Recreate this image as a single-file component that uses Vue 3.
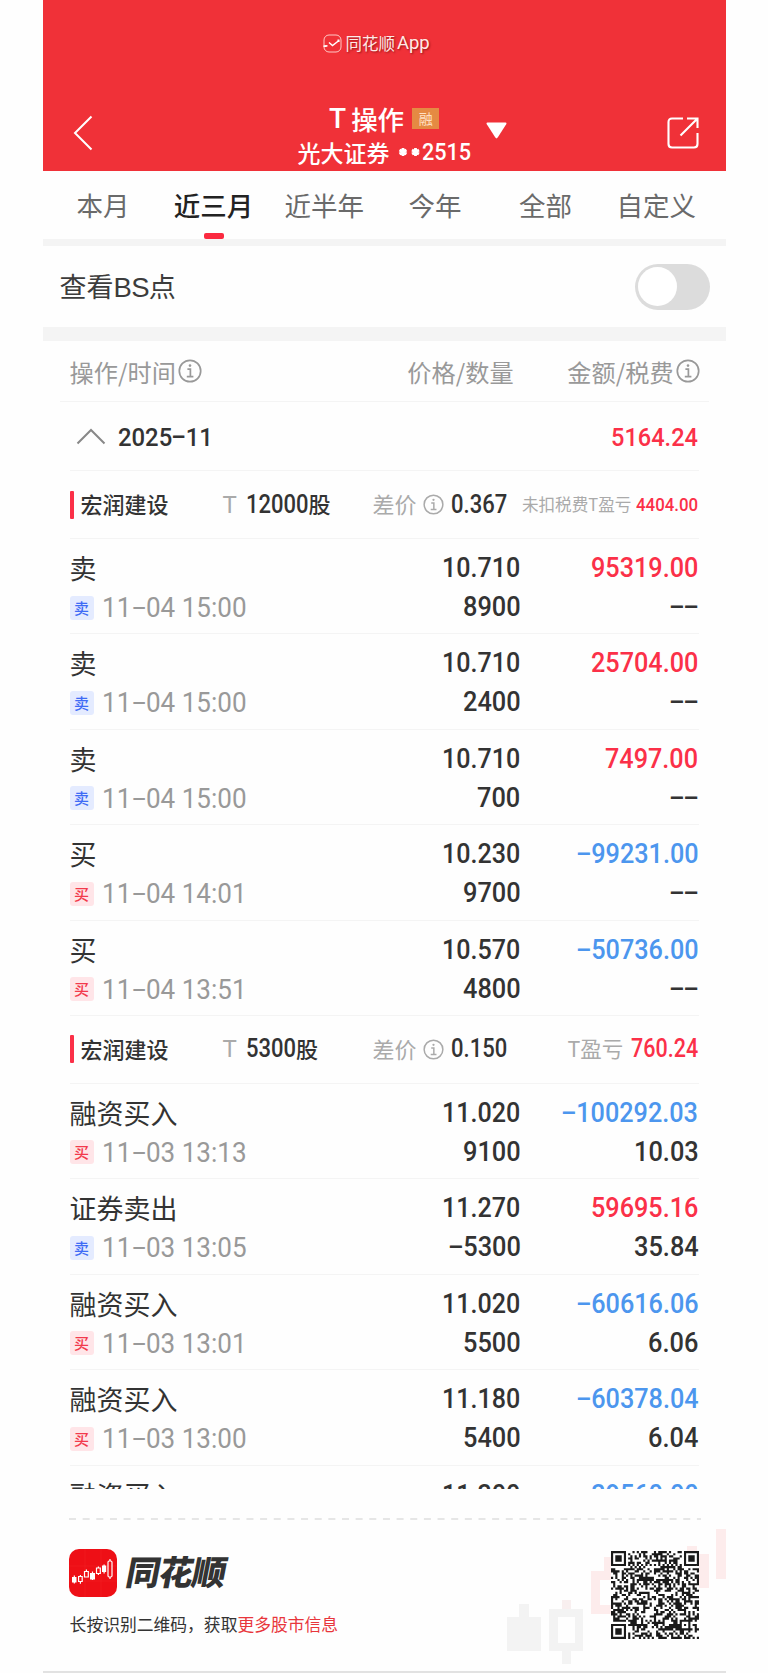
<script setup>
import { h } from 'vue'

const ADVANCE = { '.': 0.27, ':': 0.25, ' ': 0.247 }

// Figures set in a condensed face; the margin gives back the width freed by the scaling.
const Num = (props) => {
  const chars = String(props.t).split('')
  const em = chars.reduce((sum, c) => sum + (ADVANCE[c] ?? 0.5635), 0)
  return h(
    'span',
    {
      class: 'num',
      style: { transform: `scaleX(${props.s})`, marginRight: `${(-(1 - props.s) * em).toFixed(3)}em` }
    },
    chars.map((c) => (c === '-' ? h('span', { class: 'dash' }, [h('span', { class: 'dash-in' }, '-')]) : c))
  )
}
Num.props = ['t', 's']

const Info = () =>
  h('svg', { viewBox: '0 0 24 24', class: 'info', fill: 'none', stroke: 'currentColor', 'stroke-width': 1.7 }, [
    h('circle', { cx: 12, cy: 12, r: 10.7 }),
    h('path', { d: 'M9.4 10.2H12.4V17.6M8.8 17.6H15.4' }),
    h('circle', { cx: 12, cy: 6.6, r: 1.3, fill: 'currentColor', stroke: 'none' })
  ])

const tabs = ['本月', '近三月', '近半年', '今年', '全部', '自定义']

const groups = [
  {
    shares: '12000', diff: '0.367', label: '未扣税费T盈亏', profit: '4404.00', small: true,
    rows: [
      ['卖', '卖', '11-04 15:00', '10.710', '8900', '95319.00', '--'],
      ['卖', '卖', '11-04 15:00', '10.710', '2400', '25704.00', '--'],
      ['卖', '卖', '11-04 15:00', '10.710', '700', '7497.00', '--'],
      ['买', '买', '11-04 14:01', '10.230', '9700', '-99231.00', '--'],
      ['买', '买', '11-04 13:51', '10.570', '4800', '-50736.00', '--']
    ]
  },
  {
    shares: '5300', diff: '0.150', label: 'T盈亏', profit: '760.24', small: false,
    rows: [
      ['融资买入', '买', '11-03 13:13', '11.020', '9100', '-100292.03', '10.03'],
      ['证券卖出', '卖', '11-03 13:05', '11.270', '-5300', '59695.16', '35.84'],
      ['融资买入', '买', '11-03 13:01', '11.020', '5500', '-60616.06', '6.06'],
      ['融资买入', '买', '11-03 13:00', '11.180', '5400', '-60378.04', '6.04'],
      ['融资买入', '', '', '11.300', '', '-39560.00', '']
    ]
  }
]

const N = 41
const finder = (x, y) => {
  const r = Math.max(Math.abs(x - 3), Math.abs(y - 3))
  return r === 3 || r <= 1
}
let seed = 20251
const rand = () => ((seed = (seed * 1103515245 + 12345) % 2147483648) / 2147483648)
let qr = ''
for (let y = 0; y < N; y++) {
  for (let x = 0; x < N; x++) {
    let on = rand() < 0.53
    if (x < 8 && y < 8) on = x < 7 && y < 7 && finder(x, y)
    else if (x > N - 9 && y < 8) on = x > N - 8 && y < 7 && finder(x - N + 7, y)
    else if (x < 8 && y > N - 9) on = x < 7 && y > N - 8 && finder(x, y - N + 7)
    else if (Math.abs(x - 34) < 3 && Math.abs(y - 34) < 3) on = Math.max(Math.abs(x - 34), Math.abs(y - 34)) !== 1
    else if (x === 6 || y === 6) on = (x + y) % 2 === 0
    if (on) qr += `M${x} ${y}h1v1h-1z`
  }
}
</script>

<template>
  <main class="card">
    <header class="top">
      <div class="brand">
        <svg class="brand-icon" viewBox="0 0 19 19" fill="none" stroke="#ffc9c6">
          <rect x="1" y="1" width="17" height="17" rx="5" stroke-width="1" />
          <path d="M0.5 12.3L4.5 11.8M6 8.500L9.500 11.500L16 6.500" stroke="#fff" stroke-width="1.5" />
          <path d="M2.500 11.500V13M15.500 5.500V8" stroke="#fff" stroke-width="2" />
        </svg>
        <span>同花顺</span><span class="latin">App</span>
      </div>
      <div class="bar">
        <svg class="back" viewBox="0 0 20 36" fill="none" stroke="#fff" stroke-width="2"><path d="M18.5 1.5L2 18L18.5 34.5" /></svg>
        <div class="title">
          <div class="line1"><span class="latin t">T</span><span>操作</span><span class="rong">融</span></div>
          <div class="line2"><span>光大证券</span><svg class="stars" viewBox="0 0 24 10" stroke="#fff" stroke-width="2.8"><path d="M5 1V9M1.5 3L8.5 7M1.5 7L8.5 3M17.5 1V9M14 3L21 7M14 7L21 3" /></svg><Num t="2515" :s="0.9" class="acct" /></div>
        </div>
        <div class="right">
          <svg class="caret" viewBox="0 0 21 17"><path d="M1.5 0.5H19.5Q21 0.7 20.2 2.2L11.7 15.6Q10.5 17.2 9.3 15.6L0.8 2.2Q0 0.7 1.5 .5Z" fill="#fff" /></svg>
          <svg class="share" viewBox="0 0 32 32" fill="none" stroke="#fff" stroke-width="2.1"><path d="M16 1.5H5Q1.5 1.5 1.5 5V27Q1.5 30.500 5 30.500H27Q30.500 30.500 30.500 27V16M20 1.500H30.500V11M30 2L13.500 18.500" /></svg>
        </div>
      </div>
    </header>

    <nav class="tabs">
      <div v-for="(t, i) in tabs" :key="t" class="tab" :class="{ on: i === 1 }">{{ t }}</div>
    </nav>

    <section class="switch-row">
      <div class="switch-label">查看<span class="bs">BS</span>点</div>
      <div class="toggle"><i></i></div>
    </section>

    <section class="list">
      <div class="cols">
        <div class="c1">操作/时间<Info /></div>
        <div class="c2">价格/数量</div>
        <div class="c3">金额/税费<Info /></div>
      </div>
      <div class="month">
        <svg class="up" viewBox="0 0 30 17" fill="none" stroke="#888" stroke-width="2"><path d="M1.500 15.500L15 2L28.500 15.500" /></svg>
        <Num t="2025-11" :s="0.9" class="mlabel" />
        <Num t="5164.24" :s="0.89" class="red msum" />
      </div>
      <template v-for="g in groups" :key="g.shares">
        <div class="stock">
          <div class="sname"><span>宏润建设</span></div>
          <div class="shares"><span class="latin tee">T</span><Num :t="g.shares" :s="0.88" class="sn" /><b>股</b></div>
          <div class="diff"><span>差价</span><Info /><Num :t="g.diff" :s="0.88" class="sn" /></div>
          <div class="profit" :class="{ small: g.small }"><span>{{ g.label }}</span><Num :t="g.profit" :s="g.small ? 0.91 : 0.86" class="sn red" /></div>
        </div>
        <div v-for="(r, i) in g.rows" :key="i" class="item" :class="{ cut: !r[1] }">
          <div class="c1">
            <div class="op">{{ r[0] }}</div>
            <div v-if="r[1]" class="time"><span class="tag" :class="{ sell: r[1] === '卖' }">{{ r[1] }}</span><Num :t="r[2]" :s="0.93" /></div>
          </div>
          <div class="vals c2"><div><Num :t="r[3]" :s="0.88" /></div><div v-if="r[4]"><Num :t="r[4]" :s="0.89" /></div></div>
          <div class="vals c3">
            <div :class="r[5][0] === '-' ? 'blue' : 'red'"><Num :t="r[5]" :s="0.885" /></div>
            <div v-if="r[6]"><Num :t="r[6]" :s="0.89" /></div>
          </div>
        </div>
      </template>
    </section>

    <footer class="foot">
      <svg class="candles" viewBox="0 0 250 150">
        <path d="M43 77h10v13h12v34H31V90h12z" fill="#f3f3f3" />
        <path d="M73 82h34v42H95v13H86v-13H73zM82 90v26h17V90z" fill="#f3f3f3" fill-rule="evenodd" />
        <path d="M86 73h9v9h-9z" fill="#f8efef" />
        <path d="M115 44h13V30h10v14h15v43h-38zM124 53v25h20V53zM211 19h10v8h12v34h-34V27h12zM240 2h10v50h-10z" fill="#fdecec" fill-rule="evenodd" />
      </svg>
      <svg class="rule" viewBox="0 0 632 2"><path d="M0 1H632" stroke="#e6e6e6" stroke-width="2" stroke-dasharray="7 6.650" /></svg>
      <div class="foot-body">
        <div class="foot-left">
          <div class="logo-row">
            <svg class="logo" viewBox="0 0 48 48">
              <rect width="48" height="48" rx="10" fill="#ee0f16" />
              <path d="M0 17H48M0 32H48M16 0V48M32 0V48" stroke="#f7353a" stroke-width=".4" opacity=".6" />
              <g fill="#fff">
                <path d="M3 28h4.500v5.500H3zM4.700 26.500h1.200v8H4.700zM21 24h5v6.500h-5zM22.900 22.500h1.200v8.500h-1.200zM33 16.500h4.200v6.500H33zM34.500 15.500h1.200v9h-1.200z" />
              </g>
              <g fill="none" stroke="#fff" stroke-width="1.200">
                <path d="M9.600 27.500h3.600v5H9.600zM11.400 26v1.500M11.400 32.500v2.200M15.500 22.500h3.800v5.500h-3.800zM17.400 20.500v2M27.500 19h3.800v5.500h-3.800zM29.400 17.500v1.500M29.400 24.500v1.500" />
                <rect x="39" y="12" width="4" height="16" rx="1.200" /><path d="M41 10v2M41 28v2" />
              </g>
            </svg>
            <span class="word">同花顺</span>
          </div>
          <p class="hint">长按识别二维码，获取<em>更多股市信息</em></p>
        </div>
        <svg class="qr" viewBox="0 0 41 41"><rect width="41" height="41" fill="#fff" /><path :d="qr" fill="#1a1a1a" /></svg>
      </div>
    </footer>
  </main>
</template>

<style>
body { background: #fefefe; }
.num {
  display: inline-block;
  font-family: Roboto, "Liberation Sans", sans-serif;
  transform-origin: left center;
  white-space: pre;
}
.dash { display: inline-block; width: .5635em; text-align: center; }
.dash-in { display: inline-block; transform: scaleX(1.85) translateY(-.03em); }
.info { display: block; flex: none; }
</style>

<style scoped>
.card {
  width: 683px;
  height: 1673px;
  margin-left: 42.6px;
  box-sizing: border-box;
  display: flex;
  flex-direction: column;
  background: #fefefe;
  border-bottom: 2px solid #e2e2e2;
  font-family: "Noto Sans CJK SC", sans-serif;
  color: #333;
  overflow: hidden;
}
.latin { font-family: Roboto, sans-serif; }
.red { color: #fb3048; }
.blue { color: #4c96ee; }

.top { height: 171px; flex: none; background: #f03138; color: #fff; display: flex; flex-direction: column; }
.brand {
  height: 86px; display: flex; align-items: center; justify-content: center;
  font-size: 16.5px; color: #ffe9e6; text-shadow: 1px 1px 2px rgba(90, 0, 0, .6);
  margin-left: -15px;
}
.brand-icon { width: 19px; height: 19px; margin-right: 3px; }
.brand .latin { margin-left: 2px; font-size: 18.500px; }
.bar { flex: 1; display: grid; grid-template-columns: 1fr 172px 1fr; }
.back { width: 20px; height: 36px; margin: 29px 0 0 30px; }
.title { display: flex; flex-direction: column; align-items: center; padding-top: 14px; }
.line1 { height: 36px; display: flex; align-items: center; font-size: 26.5px; font-weight: 500; }
.line1 .t { margin-right: 5px; font-size: 28px; font-weight: 500; }
.rong {
  margin-left: 8px; width: 27px; height: 21px; line-height: 20px; text-align: center;
  background: #e58a43; color: #ffe0c4; font-size: 14px; font-weight: 400;
}
.line2 { height: 31px; display: flex; align-items: center; font-size: 23px; font-weight: 500; white-space: nowrap; }
.stars { width: 24px; height: 10px; margin-left: 8px; }
.acct { font-size: 24px; }
.right { display: flex; justify-content: space-between; align-items: flex-start; padding: 0 27px 0 16px; }
.caret { width: 21px; height: 17px; margin-top: 36px; }
.share { width: 32px; height: 32px; margin-top: 31px; }

.tabs { flex: none; height: 68px; padding: 0 14px 0 5px; display: flex; border-bottom: 7px solid #f4f4f4; }
.tab { flex: 1; position: relative; text-align: center; font-size: 26.5px; line-height: 68px; color: #6a6a6a; }
.tab.on { color: #222; font-weight: 500; }
.tab.on::after {
  content: ""; position: absolute; left: 50%; bottom: 0; margin-left: -10px;
  width: 20px; height: 6px; border-radius: 2px; background: #fb2a40;
}

.switch-row {
  flex: none; height: 81px; padding: 0 16px 0 17px; border-bottom: 14px solid #f4f4f4;
  display: flex; align-items: center; justify-content: space-between;
}
.switch-label { font-size: 27px; line-height: 40px; color: #3c3c3c; }
.bs { font-family: "Liberation Sans", sans-serif; font-size: 27.500px; letter-spacing: -.8px; }
.toggle { width: 75px; height: 46px; border-radius: 23px; background: #dcdcdc; display: flex; align-items: center; }
.toggle i { width: 39px; height: 39px; border-radius: 50%; background: #fff; margin-left: 3.500px; }

.list { flex: none; height: 1147.500px; overflow: hidden; padding: 0 27px; }
.cols {
  height: 61px; margin: 0 -10px; padding: 0 10px; display: grid; grid-template-columns: 1fr 150px 179px;
  align-items: center; color: #999; font-size: 24.200px; border-bottom: 1px solid #f4f4f4; box-sizing: border-box;
}
.cols > div { display: flex; align-items: center; white-space: nowrap; }
.cols .info { width: 24px; height: 24px; margin-left: 2px; }
.cols .c2, .cols .c3 { justify-content: flex-end; }
.cols .c2 { padding-right: 6px; }
.cols .c3 { margin-right: -1px; }
.month { height: 69px; box-sizing: border-box; border-bottom: 1px solid #f4f4f4; display: flex; align-items: center; }
.up { width: 30px; height: 17px; margin: 0 12px 0 6px; }
.month .num { font-size: 26.500px; font-weight: 500; }
.msum { margin-left: auto; }

.stock {
  height: 68px; box-sizing: border-box; border-bottom: 1px solid #f4f4f4;
  display: grid; grid-template-columns: 153px 150px auto 1fr; align-items: center; font-size: 22px; line-height: 32px; white-space: nowrap;
}
.stock > div { display: flex; align-items: center; height: 32px; }
.sname { font-weight: 500; }
.sname::before { content: ""; width: 4px; height: 28px; border-radius: 1px; background: #fb3048; margin-right: 7px; }
.sname span, .shares b, .diff > span:first-child, .profit > span:first-child { margin-top: -3px; }
.tee { color: #aaa; font-size: 24px; margin-right: 9px; }
.sn { font-size: 25px; font-weight: 500; }
.shares b { font-weight: 500; }
.diff { color: #aaa; }
.diff .info { width: 21px; height: 21px; margin: 0 7px 0 6px; }
.diff .sn { color: #333; }
.profit { justify-content: flex-end; color: #aaa; }
.profit span:first-child { margin-right: 8px; font-size: 21.500px; }
.profit.small span:first-child { font-size: 16.600px; margin-right: 5px; margin-top: -1px; }
.profit.small .sn { font-size: 18.500px; }

.item {
  height: 95.400px; box-sizing: border-box; border-bottom: 1px solid #f4f4f4; padding-top: 9px;
  display: grid; grid-template-columns: 1fr 150px 178px; line-height: 39px;
}
.item.cut { height: 49px; border-bottom: 0; }
.op { height: 40px; font-size: 27px; line-height: 39px; }
.time { height: 39px; display: flex; align-items: center; color: #999; font-size: 28px; }
.tag {
  width: 24px; height: 24px; line-height: 23px; border-radius: 3px; text-align: center; font-size: 15px; font-weight: 500;
  margin-right: 8px; background: #ffe5e8; color: #f23a4c;
}
.tag.sell { background: #e4ebff; color: #3f6bf5; }
.vals { font-size: 28.500px; font-weight: 500; }
.vals > div { height: 39px; display: flex; justify-content: flex-end; align-items: center; }

.foot { flex: 1; position: relative; padding: 29px 25px 0 26px; }
.rule { display: block; width: 632px; height: 2px; }
.candles { position: absolute; width: 250px; height: 150px; right: 0; top: 38px; }
.foot-body { position: relative; display: flex; justify-content: space-between; margin-top: 29px; }
.logo-row { display: flex; align-items: center; height: 48px; }
.logo { width: 48px; height: 48px; }
.word { margin-left: 10px; margin-top: -3px; font-size: 34px; font-weight: 900; line-height: 48px; transform: skewX(-11deg); letter-spacing: -1px; }
.hint { margin: 14px 0 0 1px; font-size: 16.800px; line-height: 26px; }
.hint em { font-style: normal; color: #e8363c; }
.qr { width: 88px; height: 88px; margin: 2px 2px 0 0; }
</style>
